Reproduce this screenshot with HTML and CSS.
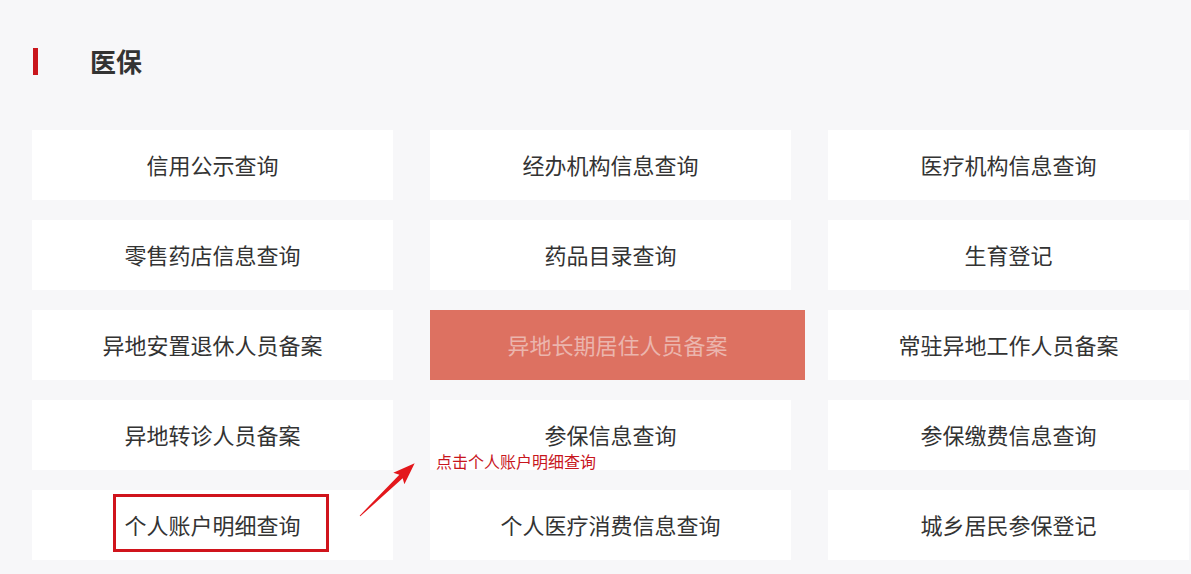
FILE: index.html
```html
<!DOCTYPE html>
<html lang="zh-CN">
<head>
<meta charset="utf-8">
<title>医保</title>
<link rel="stylesheet" href="styles.css">
</head>
<body>
<div class="page">
  <div class="header">
    <span class="bar"></span>
    <h1 class="title">医保</h1>
  </div>
  <div class="grid">
    <div class="card">信用公示查询</div>
    <div class="card">经办机构信息查询</div>
    <div class="card">医疗机构信息查询</div>
    <div class="card">零售药店信息查询</div>
    <div class="card">药品目录查询</div>
    <div class="card">生育登记</div>
    <div class="card">异地安置退休人员备案</div>
    <div class="card card-active">异地长期居住人员备案</div>
    <div class="card">常驻异地工作人员备案</div>
    <div class="card">异地转诊人员备案</div>
    <div class="card">参保信息查询</div>
    <div class="card">参保缴费信息查询</div>
    <div class="card">个人账户明细查询</div>
    <div class="card">个人医疗消费信息查询</div>
    <div class="card">城乡居民参保登记</div>

    <div class="mark-box"></div>
    <svg class="mark-arrow" width="70" height="70" viewBox="0 0 70 70">
      <g transform="translate(8 61) rotate(-44)">
        <polygon points="0,-0.5 57,-2.4 54,-8 76,0 54,8 57,2.4 0,0.5" fill="#e3171c"/>
      </g>
    </svg>
    <div class="mark-note">点击个人账户明细查询</div>
  </div>
</div>
</body>
</html>
```
FILE: styles.css
```css
html, body {
  margin: 0;
  padding: 0;
  background: #f7f7f9;
}
body {
  font-family: "Noto Sans CJK SC", "Microsoft YaHei", "Noto Sans", sans-serif;
  color: #333;
}
.page {
  width: 1191px;
  height: 574px;
  overflow: hidden;
}
.header {
  display: flex;
  align-items: center;
  height: 30px;
  padding: 46px 0 0 33px;
  margin-bottom: 54px;
}
.bar {
  width: 5px;
  height: 27px;
  background: #c9161d;
}
.title {
  margin: 0 0 0 52px;
  font-size: 26px;
  font-weight: bold;
  line-height: 30px;
  color: #333;
}
.grid {
  position: relative;
  display: grid;
  grid-template-columns: 361px 361px 361px;
  grid-auto-rows: 70px;
  column-gap: 37px;
  row-gap: 20px;
  margin-left: 32px;
}
.card {
  background: #fff;
  display: flex;
  align-items: center;
  justify-content: center;
  padding-bottom: 3px;
  box-sizing: border-box;
  font-size: 22px;
  color: #333;
  white-space: nowrap;
}
.card-active {
  width: 375px;
  background: #dd7161;
  color: #ebb5ad;
  position: relative;
  z-index: 1;
}
.mark-box {
  position: absolute;
  left: 81px;
  top: 364px;
  width: 210px;
  height: 52px;
  border: 3px solid #d0141c;
}
.mark-arrow {
  position: absolute;
  left: 320px;
  top: 325px;
}
.mark-note {
  position: absolute;
  left: 404px;
  top: 321px;
  font-size: 16px;
  line-height: 20px;
  color: #c8161d;
  white-space: nowrap;
}
```
